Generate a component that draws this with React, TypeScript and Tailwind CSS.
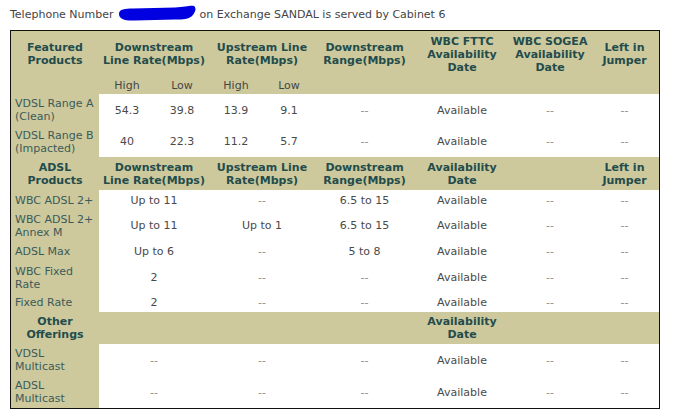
const tan = "bg-[#cdc99c]";

type Cell = { text: string; span?: number };

const Dash = "--";

const HeadCell = ({ children, span }: { children?: React.ReactNode; span?: number }) => (
  <td colSpan={span} className="px-[2px] text-center align-middle font-bold text-[#234c4c] whitespace-nowrap">
    {children}
  </td>
);

const Label = ({ children }: { children: React.ReactNode }) => (
  <td className={`${tan} pl-[4px] pr-[2px] text-left align-middle text-[#3b5a5a] whitespace-nowrap`}>{children}</td>
);

const DataRow = ({ label, cells, h }: { label: React.ReactNode; cells: Cell[]; h: string }) => (
  <tr className={h}>
    <Label>{label}</Label>
    {cells.map((c, i) => (
      <td
        key={i}
        colSpan={c.span}
        className={`bg-white text-center align-middle whitespace-nowrap ${c.text === Dash ? "text-[#8f8f8f]" : "text-[#4a4a4a]"}`}
      >
        {c.text}
      </td>
    ))}
  </tr>
);

const Scribble = () => (
  <svg width="80" height="20" viewBox="0 0 80 20" className="shrink-0 ml-[3px] mr-[3px] -mt-[2px]">
    <path
      d="M2 11 C2 6 8 5.5 16 5.5 L58 4.5 C68 4 74 2 77 3 C80 5 78 10 75 13 C72 16 66 16.5 58 16.5 L18 17.5 C8 18 2 16 2 11 Z"
      fill="#0000e0"
    />
  </svg>
);

const tail = (...vals: string[]): Cell[] => vals.map((v) => ({ text: v }));

export default function App() {
  return (
    <div className="min-h-screen bg-white pt-[4px] pl-[10px] text-[11px] leading-[13px] text-[#444]" style={{ fontFamily: '"DejaVu Sans", Verdana, sans-serif' }}>
      <div className="h-[20px] flex items-center whitespace-nowrap">
        <span>Telephone Number</span>
        <Scribble />
        <span>on Exchange SANDAL is served by Cabinet 6</span>
      </div>
      <div className={`mt-[6px] w-[650px] border border-[#111] ${tan}`}>
        <table className="w-full table-fixed border-separate border-spacing-0">
          <colgroup>
            <col className="w-[88px]" />
            <col className="w-[56px]" />
            <col className="w-[54px]" />
            <col className="w-[54px]" />
            <col className="w-[52px]" />
            <col className="w-[99px]" />
            <col className="w-[96px]" />
            <col className="w-[80px]" />
            <col className="w-[69px]" />
          </colgroup>
          <tbody>
            <tr className="h-[46px]">
              <HeadCell>Featured<br />Products</HeadCell>
              <HeadCell span={2}>Downstream<br />Line Rate(Mbps)</HeadCell>
              <HeadCell span={2}>Upstream Line<br />Rate(Mbps)</HeadCell>
              <HeadCell>Downstream<br />Range(Mbps)</HeadCell>
              <HeadCell>WBC FTTC<br />Availability<br />Date</HeadCell>
              <HeadCell>WBC SOGEA<br />Availability<br />Date</HeadCell>
              <HeadCell>Left in<br />Jumper</HeadCell>
            </tr>
            <tr className="h-[17px] text-[#454545]">
              <td />
              <td className="text-center">High</td>
              <td className="text-center">Low</td>
              <td className="text-center">High</td>
              <td className="text-center">Low</td>
              <td />
              <td />
              <td />
              <td />
            </tr>
            <DataRow h="h-[32px]" label={<>VDSL Range A<br />(Clean)</>} cells={tail("54.3", "39.8", "13.9", "9.1", Dash, "Available", Dash, Dash)} />
            <DataRow h="h-[31px]" label={<>VDSL Range B<br />(Impacted)</>} cells={tail("40", "22.3", "11.2", "5.7", Dash, "Available", Dash, Dash)} />
            <tr className="h-[33px]">
              <HeadCell>ADSL<br />Products</HeadCell>
              <HeadCell span={2}>Downstream<br />Line Rate(Mbps)</HeadCell>
              <HeadCell span={2}>Upstream Line<br />Rate(Mbps)</HeadCell>
              <HeadCell>Downstream<br />Range(Mbps)</HeadCell>
              <HeadCell>Availability<br />Date</HeadCell>
              <HeadCell />
              <HeadCell>Left in<br />Jumper</HeadCell>
            </tr>
            <DataRow h="h-[20px]" label="WBC ADSL 2+" cells={[{ text: "Up to 11", span: 2 }, { text: Dash, span: 2 }, ...tail("6.5 to 15", "Available", Dash, Dash)]} />
            <DataRow h="h-[31px]" label={<>WBC ADSL 2+<br />Annex M</>} cells={[{ text: "Up to 11", span: 2 }, { text: "Up to 1", span: 2 }, ...tail("6.5 to 15", "Available", Dash, Dash)]} />
            <DataRow h="h-[21px]" label="ADSL Max" cells={[{ text: "Up to 6", span: 2 }, { text: Dash, span: 2 }, ...tail("5 to 8", "Available", Dash, Dash)]} />
            <DataRow h="h-[31px]" label={<>WBC Fixed<br />Rate</>} cells={[{ text: "2", span: 2 }, { text: Dash, span: 2 }, ...tail(Dash, "Available", Dash, Dash)]} />
            <DataRow h="h-[19px]" label="Fixed Rate" cells={[{ text: "2", span: 2 }, { text: Dash, span: 2 }, ...tail(Dash, "Available", Dash, Dash)]} />
            <tr className="h-[32px]">
              <HeadCell>Other<br />Offerings</HeadCell>
              <HeadCell span={5} />
              <HeadCell>Availability<br />Date</HeadCell>
              <HeadCell />
              <HeadCell />
            </tr>
            <DataRow h="h-[32px]" label={<>VDSL<br />Multicast</>} cells={[{ text: Dash, span: 2 }, { text: Dash, span: 2 }, ...tail(Dash, "Available", Dash, Dash)]} />
            <DataRow h="h-[32px]" label={<>ADSL<br />Multicast</>} cells={[{ text: Dash, span: 2 }, { text: Dash, span: 2 }, ...tail(Dash, "Available", Dash, Dash)]} />
          </tbody>
        </table>
      </div>
    </div>
  );
}
